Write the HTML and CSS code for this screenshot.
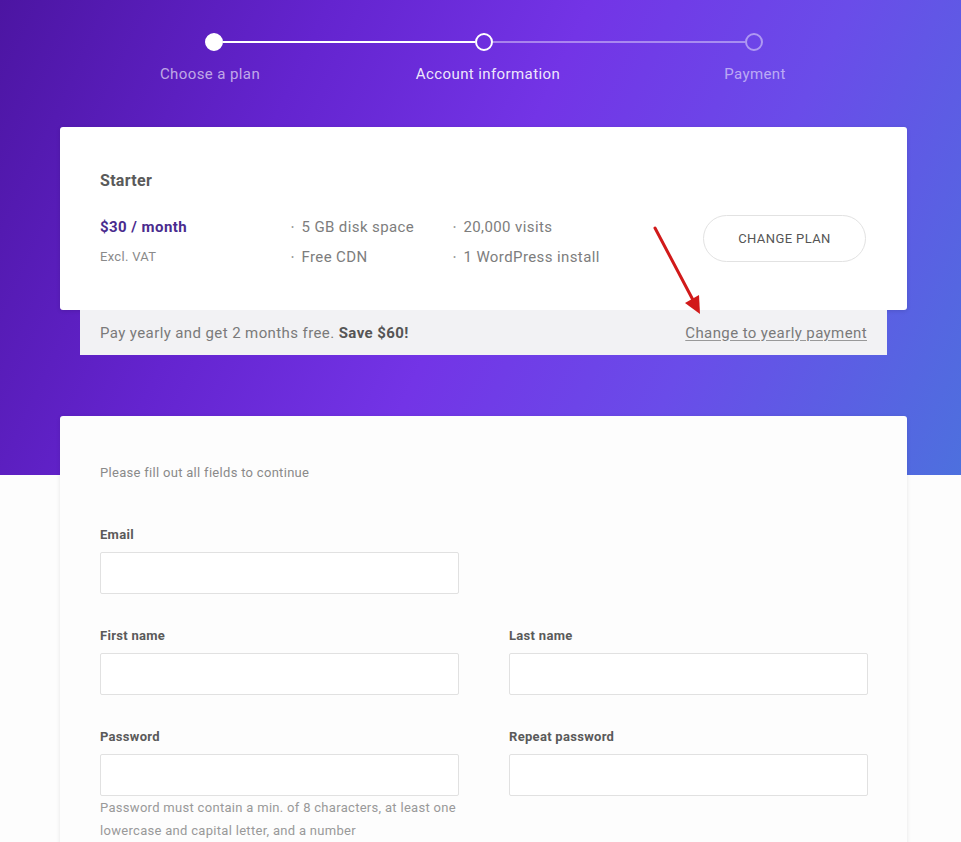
FILE: index.html
```html
<!DOCTYPE html>
<html lang="en">
<head>
  <meta charset="UTF-8">
  <title>Account information</title>
  <link rel="stylesheet" href="styles.css">
</head>
<body>
<div class="page">
  <div class="wrap">

    <div class="stepper">
      <div class="track">
        <span class="dot done"></span>
        <span class="line done"></span>
        <span class="dot current"></span>
        <span class="line"></span>
        <span class="dot"></span>
      </div>
      <div class="labels">
        <span class="step-label done">Choose a plan</span>
        <span class="step-label current">Account information</span>
        <span class="step-label">Payment</span>
      </div>
    </div>

    <div class="plan">
      <div class="plan-card">
        <h3 class="plan-name">Starter</h3>
        <div class="plan-row">
          <div class="price-col">
            <div class="price">$30 / month</div>
            <div class="vat">Excl. VAT</div>
          </div>
          <ul class="features">
            <li>5 GB disk space</li>
            <li>Free CDN</li>
          </ul>
          <ul class="features">
            <li>20,000 visits</li>
            <li>1 WordPress install</li>
          </ul>
          <button class="change-btn">CHANGE PLAN</button>
        </div>
      </div>
      <div class="yearly">
        <span>Pay yearly and get 2 months free. <b>Save $60!</b></span>
        <a href="#" class="yearly-link">Change to yearly payment</a>
      </div>
      <svg class="arrow" width="60" height="100" viewBox="0 0 60 100">
        <line x1="5" y1="6" x2="43" y2="78" stroke="#d11a1a" stroke-width="3" stroke-linecap="round"/>
        <polygon points="50,92 49,73 35,81" fill="#d11a1a"/>
      </svg>
    </div>

    <form class="form-card">
      <p class="intro">Please fill out all fields to continue</p>
      <div class="fields">
        <div class="field">
          <label for="email">Email</label>
          <input id="email" type="email">
        </div>
        <div class="field"></div>
        <div class="field">
          <label for="first">First name</label>
          <input id="first" type="text">
        </div>
        <div class="field">
          <label for="last">Last name</label>
          <input id="last" type="text">
        </div>
        <div class="field">
          <label for="pass">Password</label>
          <input id="pass" type="password">
          <p class="hint">Password must contain a min. of 8 characters, at least one lowercase and capital letter, and a number</p>
        </div>
        <div class="field">
          <label for="pass2">Repeat password</label>
          <input id="pass2" type="password">
        </div>
      </div>
    </form>

  </div>
</div>
</body>
</html>
```

FILE: styles.css
```css
html, body {
  margin: 0;
  padding: 0;
}
body {
  font-family: Roboto, "Liberation Sans", Arial, sans-serif;
  background: #fdfdfd;
  color: #666;
  letter-spacing: 0.3px;
  overflow: hidden;
}
.page {
  height: 842px;
  background:
    linear-gradient(115deg, #4c15a2 0%, #6424cf 28%, #7334e6 50%, #6a4ce9 72%, #4d70de 100%) top left / 100% 475px no-repeat,
    #fdfdfd;
}
.wrap {
  width: 847px;
  margin-left: 60px;
}

/* stepper */
.stepper {
  padding-top: 33px;
}
.track {
  display: flex;
  align-items: center;
  padding: 0 144px 0 145px;
  height: 18px;
}
.dot {
  width: 18px;
  height: 18px;
  box-sizing: border-box;
  border-radius: 50%;
  border: 2.5px solid rgba(255, 255, 255, 0.45);
  flex: none;
}
.dot.done {
  background: #fff;
  border-color: #fff;
}
.dot.current {
  border-color: #fff;
}
.line {
  flex: 1;
  height: 2px;
  background: rgba(255, 255, 255, 0.4);
}
.line.done {
  background: #fff;
}
.labels {
  display: grid;
  grid-template-columns: repeat(3, 270px);
  padding: 0 18px 0 19px;
  margin-top: 13px;
}
.step-label {
  text-align: center;
  font-size: 15px;
  line-height: 20px;
  letter-spacing: 0.4px;
  color: rgba(255, 255, 255, 0.55);
}
.step-label.done {
  color: rgba(255, 255, 255, 0.62);
  margin-right: 8px;
}
.step-label.current {
  color: rgba(255, 255, 255, 0.9);
  margin-left: 8px;
}
.step-label:last-child {
  margin-left: 2px;
}

/* plan */
.plan {
  position: relative;
  margin-top: 43px;
}
.plan-card {
  background: #fff;
  border-radius: 3px;
  padding: 42px 41px 38px 40px;
  box-shadow: 0 1px 4px rgba(0, 0, 0, 0.12);
}
.plan-name {
  margin: 0;
  font-size: 16px;
  line-height: 24px;
  font-weight: 700;
  color: #5a5a5a;
}
.plan-row {
  display: grid;
  grid-template-columns: 190px 162px 1fr auto;
  margin-top: 19px;
}
.price {
  font-size: 15px;
  line-height: 30px;
  font-weight: 700;
  letter-spacing: 0.45px;
  color: #4a2b8e;
}
.vat {
  font-size: 13px;
  line-height: 30px;
  color: #8a8a8a;
}
.features {
  list-style: none;
  margin: 0;
  padding: 0;
}
.features li {
  font-size: 15px;
  line-height: 30px;
  letter-spacing: 0.4px;
  color: #7d7d7d;
}
.features li::before {
  content: "\2022";
  font-size: 9px;
  vertical-align: 2px;
  margin: 0 7px 0 1px;
  color: #999;
}
.change-btn {
  align-self: start;
  margin-top: 3px;
  width: 163px;
  height: 47px;
  border: 1px solid #e2e2e2;
  border-radius: 24px;
  background: #fff;
  font-family: inherit;
  font-size: 13px;
  letter-spacing: 0.4px;
  color: #555;
  cursor: pointer;
}
.yearly {
  display: flex;
  justify-content: space-between;
  align-items: center;
  margin: 0 20px;
  height: 45px;
  padding: 0 20px;
  background: #f2f2f4;
  font-size: 15px;
  letter-spacing: 0.4px;
  color: #7a7a7a;
}
.yearly b {
  color: #555;
}
.yearly-link {
  color: #7a7a7a;
  text-decoration: underline;
  text-decoration-color: #999;
  text-underline-offset: 2px;
}
.arrow {
  position: absolute;
  left: 590px;
  top: 95px;
}

/* form */
.form-card {
  margin-top: 61px;
  background: #fdfdfd;
  border-radius: 3px;
  padding: 48px 40px 40px;
  box-shadow: 0 1px 4px rgba(0, 0, 0, 0.1);
  min-height: 400px;
}
.intro {
  margin: 0;
  font-size: 13px;
  line-height: 18px;
  color: #8a8a8a;
}
.fields {
  display: grid;
  grid-template-columns: 359px 359px;
  column-gap: 50px;
  row-gap: 33px;
  margin-top: 44px;
}
.field label {
  display: block;
  font-size: 13px;
  line-height: 18px;
  font-weight: 700;
  color: #5a5a5a;
  margin-bottom: 8px;
}
.field input {
  display: block;
  box-sizing: border-box;
  width: 100%;
  height: 42px;
  border: 1.5px solid #e1e1e1;
  border-radius: 2px;
  background: #fff;
}
.hint {
  margin: 0;
  font-size: 13px;
  line-height: 23px;
  color: #999;
}
```
